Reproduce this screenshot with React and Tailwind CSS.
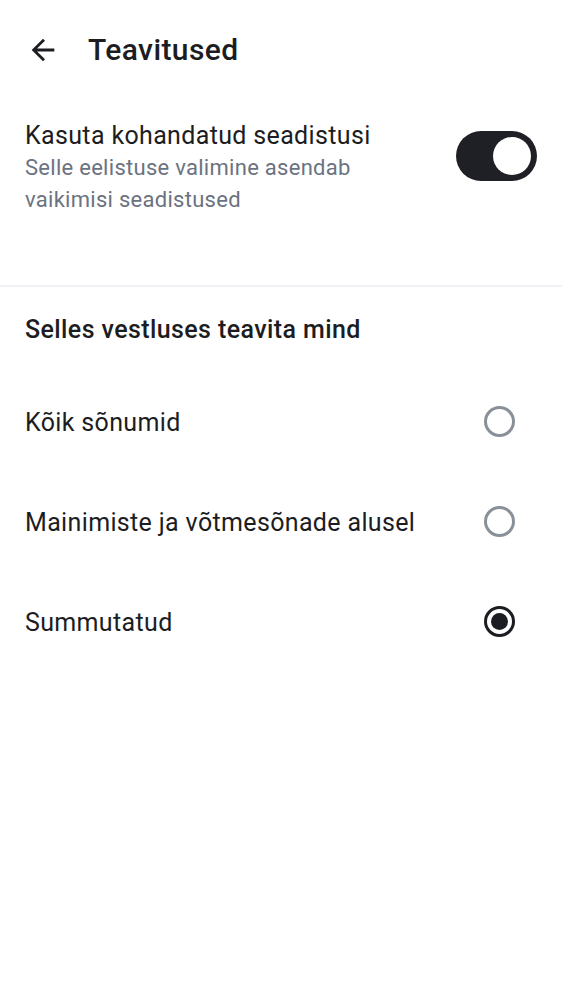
import { useState } from 'react';

const OPTIONS = ['Kõik sõnumid', 'Mainimiste ja võtmesõnade alusel', 'Summutatud'];

function Radio({ checked }) {
  return (
    <span className={`flex h-[31px] w-[31px] items-center justify-center rounded-full border-[3px] ${checked ? 'border-[#1c1d22]' : 'border-[#8a9098]'}`}>
      {checked && <span className="h-[17px] w-[17px] rounded-full bg-[#1c1d22]" />}
    </span>
  );
}

export default function App() {
  const [custom, setCustom] = useState(true);
  const [level, setLevel] = useState(2);

  return (
    <div className="min-h-[1000px] w-[562px] bg-white text-[#1c1d22] font-['Roboto',sans-serif]">
      {/* top bar */}
      <div className="flex h-[100px] items-center">
        <button className="ml-[26px] flex h-[34px] w-[34px] items-center justify-center">
          <svg width="34" height="34" viewBox="0 0 24 24" fill="#1c1d22">
            <path d="M20 11H7.83l5.59-5.59L12 4l-8 8 8 8 1.41-1.41L7.83 13H20v-2z" />
          </svg>
        </button>
        <h1 className="ml-[28px] -mt-[2px] text-[30px] font-medium tracking-[0.4px]">Teavitused</h1>
      </div>

      {/* custom settings toggle */}
      <div className="flex items-start justify-between px-[25px] pt-[20px] pb-[69px]">
        <div className="flex flex-col">
          <span className="text-[25px] leading-[32px] tracking-[0.35px]">Kasuta kohandatud seadistusi</span>
          <span className="w-[350px] text-[22px] leading-[32px] tracking-[0.28px] text-[#6b7280]">
            Selle eelistuse valimine asendab vaikimisi seadistused
          </span>
        </div>
        <button
          onClick={() => setCustom(!custom)}
          className={`mt-[11px] flex h-[50px] w-[81px] shrink-0 items-center rounded-full px-[6px] ${custom ? 'justify-end bg-[#1f2025]' : 'justify-start bg-[#c4c7cc]'}`}
        >
          <span className="h-[38px] w-[38px] rounded-full bg-white" />
        </button>
      </div>

      <div className="h-[2px] bg-[#f0f0f5]" />

      <div className="px-[25px] pt-[27px] text-[25px] font-medium leading-[32px] tracking-[0.4px]">Selles vestluses teavita mind</div>

      <div className="mt-[25px] flex flex-col">
        {OPTIONS.map((label, i) => (
          <button
            key={label}
            onClick={() => setLevel(i)}
            className="flex h-[100px] items-center justify-between pl-[25px] pr-[47px] text-left"
          >
            <span className="mt-[3px] text-[25px] tracking-[0.35px]">{label}</span>
            <Radio checked={level === i} />
          </button>
        ))}
      </div>
    </div>
  );
}
